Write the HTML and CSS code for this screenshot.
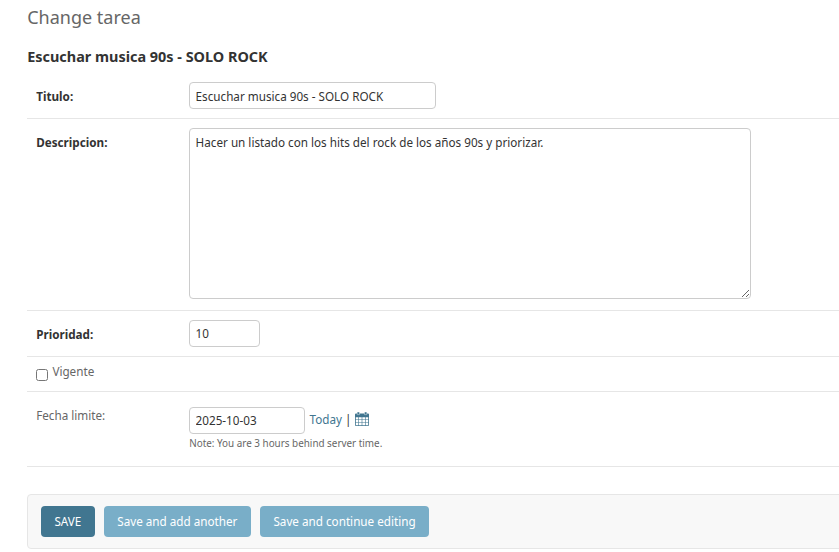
FILE: index.html
```html
<!DOCTYPE html>
<html lang="es">
<head>
<meta charset="utf-8">
<title>Change tarea</title>
<link rel="stylesheet" href="styles.css">
</head>
<body>
<main class="content">
  <h1>Change tarea</h1>
  <h2>Escuchar musica 90s - SOLO ROCK</h2>
  <form>
    <div class="row row-title">
      <label class="required" for="titulo">Titulo:</label>
      <input class="text" id="titulo" type="text" value="Escuchar musica 90s - SOLO ROCK">
    </div>
    <div class="row row-description">
      <label class="required" for="descripcion">Descripcion:</label>
      <textarea id="descripcion" spellcheck="false">Hacer un listado con los hits del rock de los años 90s y priorizar.</textarea>
    </div>
    <div class="row row-priority">
      <label class="required" for="prioridad">Prioridad:</label>
      <input class="number" id="prioridad" type="text" value="10">
    </div>
    <div class="row row-check">
      <input id="vigente" type="checkbox">
      <label for="vigente">Vigente</label>
    </div>
    <div class="row row-date">
      <label for="fecha">Fecha limite:</label>
      <div class="date-field">
        <div class="date-line">
          <input class="date" id="fecha" type="text" value="2025-10-03">
          <span class="shortcuts"><a>Today</a><span class="bar">|</span>
            <svg class="calendar" width="14" height="14" viewBox="0 0 14 14">
              <path class="frame" d="M1 1.5h12a1 1 0 0 1 1 1V13a1 1 0 0 1-1 1H1a1 1 0 0 1-1-1V2.5a1 1 0 0 1 1-1z"/>
              <path class="rings" d="M2.2 0h2.3v2.6H2.2zM9.5 0h2.3v2.6H9.5z"/>
              <path class="cells" d="M.8 5.2h2.6v2.3H.8zM4 5.2h2.7v2.3H4zM7.3 5.2H10v2.300H7.300zM10.600 5.200h2.600v2.300h-2.600zM.8 8.100h2.600v2.300H.8zM4 8.100h2.700v2.300H4zM7.300 8.100H10v2.300H7.300zM10.600 8.100h2.600v2.300h-2.600zM.8 11h2.600v2.200H.8zM4 11h2.700v2.200H4zM7.300 11H10v2.200H7.300zM10.600 11h2.600v2.200h-2.600z"/>
            </svg>
          </span>
        </div>
        <div class="note">Note: You are 3 hours behind server time.</div>
      </div>
    </div>
    <div class="submit-row">
      <button class="primary" type="button">SAVE</button>
      <button type="button">Save and add another</button>
      <button type="button">Save and continue editing</button>
    </div>
  </form>
</main>
</body>
</html>
```
FILE: styles.css
```css
* { box-sizing: border-box; }
html { overflow: hidden; }
body {
  margin: 0;
  background: #fff;
  color: #333;
  font: 11.7px/16px "Noto Sans", sans-serif;
}
.content { padding: 6px 0 0 27px; }
h1 {
  margin: 0;
  padding-left: .2px;
  font-size: 18px;
  line-height: 23px;
  font-weight: 400;
  color: #666;
}
h2 {
  margin: 18px 0 6px;
  padding-left: .2px;
  font-size: 14.43px;
  line-height: 20px;
  font-weight: 700;
}
input, textarea, button { font: inherit; color: #333; margin: 0; }
.row {
  display: flex;
  align-items: flex-start;
  padding: 9px 0 0 9px;
  border-bottom: 1px solid #e6e6e6;
}
.row > label { width: 153px; color: #666; padding: 6px 0 0 .2px; }
.row > label.required { font-weight: 700; color: #333; }
.text, .number, .date, textarea {
  display: block;
  border: 1px solid #ccc;
  border-radius: 4px;
  background: #fff;
  padding: 4px 5.6px;
  height: 27px;
}
.text { width: 247px; }
.number { width: 71px; }
.date { width: 116px; }
.number, .date { padding-top: 3px; padding-bottom: 5px; }
textarea { width: 562px; height: 171px; padding-top: 5px; }
.row-title { height: 46px; }
.row-description { height: 192px; }
.row-priority { height: 46px; }
.row-check { height: 35px; padding-top: 7px; }
.row-check input { width: 12px; height: 12px; margin: 5px 4px 0 0; }
.row-check > label { width: auto; padding: 0 0 0 .4px; margin-top: -1px; }
.row-date { height: 75px; padding-top: 15px; }
.row-date > label { padding-top: 0; }
.date-line { display: flex; }
.shortcuts { display: flex; margin-left: 4.6px; padding-top: 4px; }
.shortcuts a { color: #417690; }
.bar { width: 6px; margin: 0 4.4px 0 3px; }
.calendar { margin-top: 1px; }
.frame, .rings { fill: #417690; }
.rings { stroke: #fff; stroke-width: .4; }
.cells { fill: #fff; }
.note { margin-top: 2px; padding-left: .2px; font-size: 9.9px; line-height: 15px; color: #666; }
.submit-row {
  display: flex;
  gap: 9px;
  height: 55px;
  margin: 27px -10px 0 0;
  padding: 11px 13px;
  background: #f8f8f8;
  border: 1px solid #e6e6e6;
  border-radius: 4px;
}
button {
  height: 31px;
  border: 0;
  border-radius: 4px;
  padding: 0 13.5px 1px;
  background: #79aec8;
  color: #fff;
  white-space: nowrap;
}
button.primary { padding: 0 13.4px 1px; background: #417690; }
```
